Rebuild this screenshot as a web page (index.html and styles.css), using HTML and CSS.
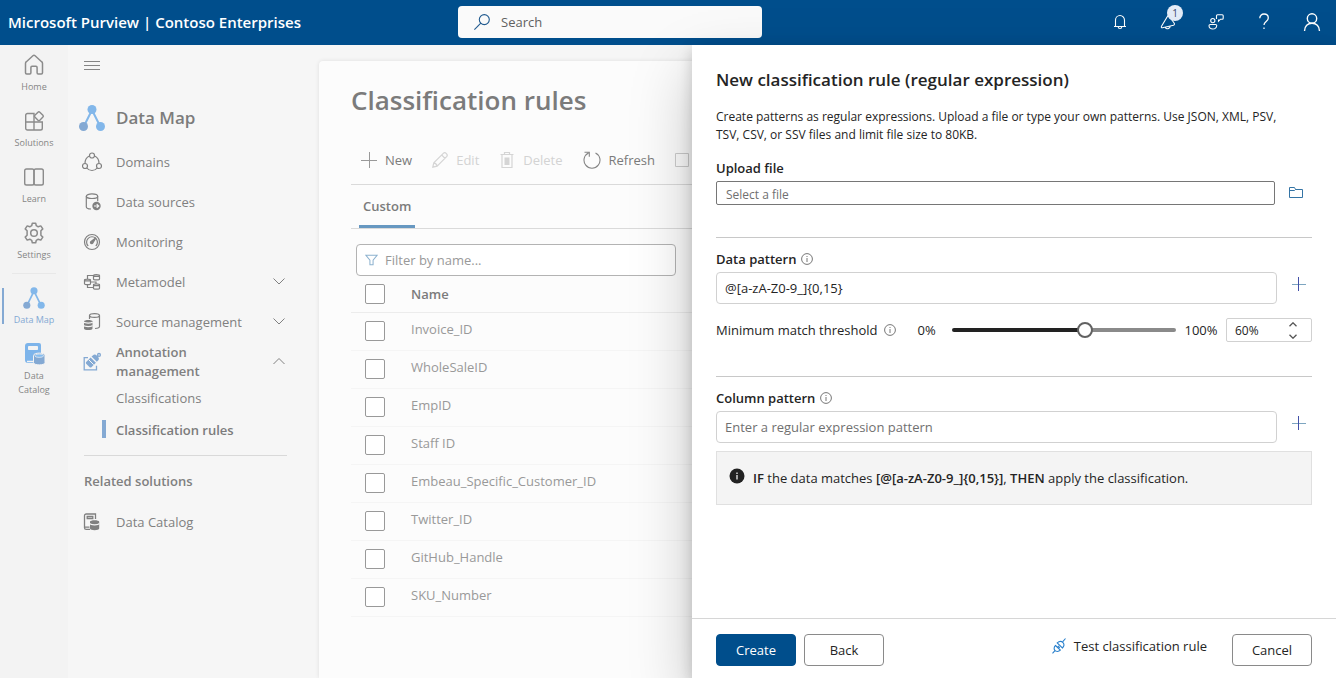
FILE: index.html
```html
<!DOCTYPE html>
<html lang="en">
<head>
<meta charset="utf-8">
<title>Microsoft Purview</title>
<link rel="stylesheet" href="styles.css">
</head>
<body>
<div class="app">
  <header class="topbar">
    <div class="brand">Microsoft Purview | Contoso Enterprises</div>
    <label class="search">
      <svg width="16" height="16" viewBox="0 0 16 16" fill="none" stroke="#205a8f" stroke-width="1.1"><circle cx="10.3" cy="5.6" r="5"/><path d="M6.8 9.2L.4 15.6"/></svg>
      <input type="search" placeholder="Search" aria-label="Search">
    </label>
    <div class="top-actions">
      <button aria-label="Notifications"><svg width="16" height="16" viewBox="0 0 16 16" fill="none" stroke="#fff" stroke-width="1.1"><path d="M2 12.5h12M3.5 12.5V6.200a4.500 4.700 0 0 1 9 0v6.300M6.200 12.700a1.800 1.800 0 0 0 3.600 0"/></svg></button>
      <button aria-label="Announcements"><svg width="16" height="16" viewBox="0 0 16 16" fill="none" stroke="#fff" stroke-width="1.1"><path d="M8 1.500L1.500 12.300c-.5.900 0 1.700 1 1.400l11-2.500c1-.3 1.200-1.400.6-2.200L9 2M5.300 13.200c1 2.500 5 1.700 4.900-1.200"/></svg><span class="badge">1</span></button>
      <button aria-label="Feedback"><svg width="16" height="16" viewBox="0 0 16 16" fill="none" stroke="#fff" stroke-width="1.100"><circle cx="4.800" cy="6.600" r="2.100"/><path d="M2.300 10.500h5.200c.8 0 1.300.4 1.200 1.200-.3 2.300-2 3.300-3.900 3.300S1.200 14 1 11.700c0-.8.5-1.200 1.300-1.200zM8.500 5V1.800c0-.6.4-1 1-1h4.700c.6 0 1 .4 1 1v2.400c0 .6-.4 1-1 1h-1.700l-2 2V5.600"/></svg></button>
      <button aria-label="Help"><svg width="16" height="18" viewBox="0 0 16 18" fill="none" stroke="#fff" stroke-width="1.300"><path d="M3.800 5.300C3.800 2.700 5.600 1 8 1s4.300 1.600 4.300 3.900c0 3.500-4.300 3.600-4.300 7.100M8 14.500v1.600"/></svg></button>
      <button aria-label="Account"><svg width="18" height="18" viewBox="0 0 18 18" fill="none" stroke="#fff" stroke-width="1.400"><circle cx="9" cy="5.500" r="4.700"/><path d="M1.500 18c0-4.700 3.300-7.800 7.500-7.800s7.500 3.100 7.500 7.800"/></svg></button>
    </div>
  </header>

  <div class="workspace">
    <nav class="rail" aria-label="Solutions">
      <a class="rail-item" href="#"><svg width="22" height="22" viewBox="0 0 22 22" fill="none" stroke="#8b8b8b" stroke-width="1.500"><path d="M2.500 9.500c0-.8.3-1.300.9-1.800l6.500-5.900c.7-.6 1.500-.6 2.200 0l6.500 5.900c.6.500.9 1 .9 1.800v9.300c0 .7-.4 1.200-1.200 1.200h-3.100c-.7 0-1.100-.5-1.100-1.200V13.500c0-.7-.4-1.200-1.100-1.200H9c-.7 0-1.100.5-1.100 1.200v5.300c0 .7-.4 1.200-1.100 1.200H3.700c-.8 0-1.200-.5-1.200-1.200z"/></svg>Home</a>
      <a class="rail-item" href="#"><svg width="22" height="22" viewBox="0 0 22 22" fill="none" stroke="#8b8b8b" stroke-width="1.400"><path d="M11 12V3.500H4.500A1.800 1.800 0 0 0 2.700 5.300v12.900A1.800 1.800 0 0 0 4.500 20h13a1.800 1.800 0 0 0 1.800-1.800V12H2.700M11 12v8"/><rect x="12.400" y="2.700" width="7" height="7" rx="1.300" transform="rotate(45 15.900 6.200)"/></svg>Solutions</a>
      <a class="rail-item" href="#"><svg width="22" height="22" viewBox="0 0 22 22" fill="none" stroke="#8b8b8b" stroke-width="1.400"><rect x="1.700" y="3" width="9.300" height="16" rx="1.800"/><rect x="11" y="3" width="9.300" height="16" rx="1.800"/></svg>Learn</a>
      <a class="rail-item" href="#"><svg width="22" height="22" viewBox="0 0 22 22" fill="none" stroke="#8b8b8b" stroke-width="1.500" stroke-linejoin="round"><circle cx="11" cy="11" r="3.300"/><path d="M9.300 1.200h3.400l.6 2.500 1.900 1.100 2.600-.9 2 3-1.900 1.900v4.400l1.900 1.900-2 3-2.600-.9-1.900 1.100-.6 2.500H9.300l-.6-2.500-1.900-1.100-2.600.9-2-3 1.900-1.900V8.800L2.200 6.900l2-3 2.600.9 1.900-1.100z"/></svg>Settings</a>
      <hr class="rail-rule">
      <a class="rail-item active" href="#"><svg width="22" height="22" viewBox="0 0 26 26"><path d="M13 5L5 21M13 5l8 16" stroke="#82b7ea" stroke-width="2"/><circle cx="13" cy="4.500" r="4.200" fill="#82b7ea"/><circle cx="4.500" cy="21.500" r="4.200" fill="#84a9d3"/><circle cx="21.500" cy="21.500" r="4.200" fill="#82b7ea"/></svg>Data Map</a>
      <a class="rail-item" href="#"><svg width="22" height="22" viewBox="0 0 22 22"><path d="M5 0h11a2 2 0 0 1 2 2v18H5a3 3 0 0 1-3-3V3a3 3 0 0 1 3-3z" fill="#7db4ea"/><rect x="5" y="3" width="10" height="4" rx=".8" fill="#f3f3f3"/><path d="M4 18.500h7" stroke="#f3f3f3" stroke-width="1.500"/><path d="M10.500 12.500c0-3.200 11.500-3.200 11.500 0v7c0 3.200-11.500 3.200-11.500 0z" fill="#84a9d3" stroke="#f3f3f3"/><ellipse cx="16.200" cy="12.700" rx="4.400" ry="1.700" fill="#86bdf0" stroke="#f3f3f3" stroke-width=".7"/></svg>Data<br>Catalog</a>
    </nav>

    <nav class="side" aria-label="Data Map">
      <button class="menu-toggle" aria-label="Collapse menu"><svg width="16" height="10" viewBox="0 0 16 10" stroke="#858585"><path d="M0 .5h16M0 4.500h16M0 8.500h16"/></svg></button>
      <div class="side-title"><svg width="26" height="26" viewBox="0 0 26 26"><path d="M13 5L5 21M13 5l8 16" stroke="#82b7ea" stroke-width="2"/><circle cx="13" cy="4.500" r="4.500" fill="#82b7ea"/><circle cx="4.500" cy="21.500" r="4.500" fill="#84a9d3"/><circle cx="21.500" cy="21.500" r="4.500" fill="#82b7ea"/></svg>Data Map</div>
      <a class="side-item" href="#"><svg width="20" height="20" viewBox="0 0 20 20" fill="none" stroke="#808080" stroke-width="1.200"><circle cx="10" cy="3.500" r="2.500"/><circle cx="3" cy="14" r="2.500"/><circle cx="17" cy="14" r="2.500"/><path d="M7.500 4C4.500 5.200 3 8 3 11.500M12.500 4c3 1.200 4.500 4 4.500 7.500M4.800 16c2.500 3.300 7.900 3.300 10.400 0"/></svg><span>Domains</span></a>
      <a class="side-item" href="#"><svg width="20" height="20" viewBox="0 0 20 20" fill="none" stroke="#808080" stroke-width="1.200"><ellipse cx="10" cy="4.200" rx="5.700" ry="2.300"/><path d="M4.300 4.200v10.500c0 1.300 2 2.200 4.700 2.300M15.700 4.200v5"/><circle cx="14.500" cy="14" r="4.200" fill="#808080" stroke="none"/><path d="M12 14h4.500M14.700 12.100l2 1.900-2 1.900" stroke="#f6f6f6"/></svg><span>Data sources</span></a>
      <a class="side-item" href="#"><svg width="20" height="20" viewBox="0 0 20 20" fill="none" stroke="#808080" stroke-width="1.200"><circle cx="10" cy="10" r="7.500"/><path d="M6.200 14a5.400 5.400 0 1 1 7.600 0"/><path d="M14 5.800l-5 3.700a1.200 1.200 0 1 0 1.700 1.600z" fill="#808080"/></svg><span>Monitoring</span></a>
      <a class="side-item" href="#"><svg width="20" height="20" viewBox="0 0 20 20" fill="none" stroke="#808080" stroke-width="1.200"><path d="M11.500 3.500c0-1.200 6-1.200 6 0V7c0 1.200-6 1.200-6 0zM11.500 3.500c0 1.200 6 1.200 6 0M11.500 12.800c0-1.200 6-1.200 6 0v3.500c0 1.200-6 1.200-6 0zM11.500 12.800c0 1.200 6 1.200 6 0M2.500 8c0-1.200 6-1.200 6 0v3.800c0 1.200-6 1.200-6 0zM2.500 8c0 1.200 6 1.200 6 0M5.500 7V3.500h6M5.500 12.800v2.700h6M8.500 10H14v1.800"/></svg><span>Metamodel</span><svg class="chev" width="12" height="8" viewBox="0 0 12 8" fill="none" stroke="#808080"><path d="M.5.5L6 6 11.500.5"/></svg></a>
      <a class="side-item" href="#"><svg width="20" height="20" viewBox="0 0 20 20" fill="none" stroke="#808080" stroke-width="1.200"><ellipse cx="12.500" cy="3.500" rx="5" ry="1.900"/><path d="M7.500 3.500V7M17.500 3.500v11c0 1-1.500 1.800-4.500 2"/><path d="M2 9.500c0-2 8.500-2 8.500 0v7c0 2-8.500 2-8.500 0z" fill="#808080" stroke="none"/><path d="M2 10c.8 1.500 7.700 1.500 8.500 0M2 13.500c.8 1.500 7.700 1.500 8.500 0" stroke="#f6f6f6"/></svg><span>Source management</span><svg class="chev" width="12" height="8" viewBox="0 0 12 8" fill="none" stroke="#808080"><path d="M.5.5L6 6 11.500.5"/></svg></a>
      <a class="side-item open" href="#"><svg width="20" height="20" viewBox="0 0 20 20" fill="none" stroke="#84a9d3" stroke-width="1.300"><path d="M6 5.600H2.200v12.200h12.300v-4"/><path d="M10.800 3.400c1.300-1.200 2.800-1 3.900.1l1.400 1.400c1 1 1.200 2.500 0 3.700l-1.300 1.200-5.300-5.200z" fill="#84a9d3" stroke="none"/><path d="M8.600 5.500l5.300 5.300-4.200 4.100c-.8.8-1.600.8-2.300 0l-3-3c-.7-.7-.7-1.500 0-2.200z" fill="#84a9d3" stroke="none"/><path d="M6.700 7.700l5 5" stroke="#f6f6f6" stroke-width="1"/><path d="M14.800 4.900l1.400-1.300"/><circle cx="17" cy="2.900" r="1.400"/></svg><span>Annotation<br>management</span><svg class="chev" width="12" height="8" viewBox="0 0 12 8" fill="none" stroke="#808080"><path d="M.5 6L6 .5 11.500 6"/></svg></a>
      <a class="sub-item" href="#">Classifications</a>
      <a class="sub-item selected" href="#">Classification rules</a>
      <hr class="side-rule">
      <div class="side-heading">Related solutions</div>
      <a class="side-item" href="#"><svg width="20" height="20" viewBox="0 0 20 20" fill="none" stroke="#808080" stroke-width="1.300"><path d="M13.500 7V2H4.200A1.700 1.700 0 0 0 2.500 3.700v12a1.700 1.700 0 0 0 1.700 1.700H8M2.700 15.200H7.500"/><path d="M5.200 4.500h5.600v2H5.200z"/><path d="M8 9.800c0-2 9.200-2 9.200 0v6.700c0 2.200-9.200 2.200-9.200 0z" fill="#808080" stroke="none"/><path d="M8 11.500c1 1.700 8.200 1.700 9.200 0" stroke="#f6f6f6"/></svg><span>Data Catalog</span></a>
    </nav>

    <main class="card">
      <h1>Classification rules</h1>
      <div class="toolbar">
        <button><svg width="16" height="16" viewBox="0 0 16 16" stroke="#999"><path d="M0 8.500h16M8.500 0v16"/></svg>New</button>
        <button disabled><svg width="16" height="16" viewBox="0 0 16 16" fill="none" stroke="#d5d5d5" stroke-width="1.200"><path d="M.8 15.200l1-4.300 9.500-9.500c1.900-1.900 5.200 1.300 3.300 3.300l-9.500 9.500zM9.700 3l3.300 3.300M1.800 10.900c1.700.3 3 1.600 3.300 3.300"/></svg>Edit</button>
        <button disabled><svg width="16" height="16" viewBox="0 0 16 16" fill="none" stroke="#d5d5d5" stroke-width="1.200"><path d="M1.500 2.500h13M5.500 2.500v-2h5v2M3 2.500v13h10v-13"/><path d="M5.500 5.500h5v7.500h-5z" fill="#d5d5d5" stroke="none"/></svg>Delete</button>
        <button><svg width="18" height="18" viewBox="0 0 18 18" fill="none" stroke="#858585" stroke-width="1.100"><path d="M5.500 2A8 8 0 1 0 12.500 2M1.500 1.200h4.800v4.600"/></svg>Refresh</button>
        <button disabled aria-label="Select all"><svg width="14" height="14" viewBox="0 0 14 14" fill="none" stroke="#ccc"><path d="M.5.5h13v13H.5z"/></svg></button>
      </div>
      <div class="tabs" role="tablist"><button class="tab" role="tab" aria-selected="true">Custom</button></div>
      <label class="filter"><svg width="13" height="12" viewBox="0 0 14 12" fill="none" stroke="#8db2cf" stroke-width="1.100"><path d="M.8.8h12.400L8.700 6.200v5H5.300v-5z"/></svg><input type="text" placeholder="Filter by name..." aria-label="Filter by name"></label>
      <table class="rules">
        <thead><tr><th class="pick"><input type="checkbox" aria-label="Select all rules"></th><th>Name</th></tr></thead>
        <tbody>
          <tr><td class="pick"><input type="checkbox" id="r1"></td><td><label for="r1">Invoice_ID</label></td></tr>
          <tr><td class="pick"><input type="checkbox" id="r2"></td><td><label for="r2">WholeSaleID</label></td></tr>
          <tr><td class="pick"><input type="checkbox" id="r3"></td><td><label for="r3">EmpID</label></td></tr>
          <tr><td class="pick"><input type="checkbox" id="r4"></td><td><label for="r4">Staff ID</label></td></tr>
          <tr><td class="pick"><input type="checkbox" id="r5"></td><td><label for="r5">Embeau_Specific_Customer_ID</label></td></tr>
          <tr><td class="pick"><input type="checkbox" id="r6"></td><td><label for="r6">Twitter_ID</label></td></tr>
          <tr><td class="pick"><input type="checkbox" id="r7"></td><td><label for="r7">GitHub_Handle</label></td></tr>
          <tr><td class="pick"><input type="checkbox" id="r8"></td><td><label for="r8">SKU_Number</label></td></tr>
        </tbody>
      </table>
    </main>
  </div>

  <aside class="drawer" aria-labelledby="drawer-title">
    <form class="drawer-form">
      <div class="drawer-body">
        <h2 id="drawer-title">New classification rule (regular expression)</h2>
        <p class="intro">Create patterns as regular expressions. Upload a file or type your own patterns. Use JSON, XML, PSV, TSV, CSV, or SSV files and limit file size to 80KB.</p>
        <section class="upload">
          <label class="field-label" for="file">Upload file</label>
          <div class="field-row">
            <input class="file-box" id="file" type="text" placeholder="Select a file">
            <button class="icon-btn" type="button" aria-label="Browse"><svg width="14" height="11" viewBox="0 0 14 11" fill="none" stroke="#3474a5"><path d="M.5 10.500V.5h5l1 2h7v8zM.5 3.500h5l1-1"/></svg></button>
          </div>
        </section>
        <section class="group data-group">
          <div class="label-line"><label class="field-label" for="data">Data pattern</label><svg class="info" width="12" height="12" viewBox="0 0 12 12" fill="none" stroke="#777"><circle cx="6" cy="6" r="5.400"/><path d="M6 5v4M6 3v1"/></svg></div>
          <div class="field-row">
            <input class="text-box" id="data" type="text" value="@[a-zA-Z0-9_]{0,15}">
            <button class="icon-btn add" type="button" aria-label="Add data pattern"><svg width="14" height="14" viewBox="0 0 14 14"><path d="M0 7.500h14" stroke="#7da5c0"/><path d="M6.500 0v14" stroke="#4250a8"/></svg></button>
          </div>
          <div class="threshold">
            <label class="threshold-label" for="range">Minimum match threshold</label><svg class="info" width="12" height="12" viewBox="0 0 12 12" fill="none" stroke="#777"><circle cx="6" cy="6" r="5.400"/><path d="M6 5v4M6 3v1"/></svg>
            <span class="low">0%</span>
            <input class="slider" id="range" type="range" min="0" max="100" value="60">
            <span class="high">100%</span>
            <div class="spinner"><input type="text" value="60%" aria-label="Threshold"><div class="steps"><button type="button" aria-label="Increase"><svg width="8" height="5" viewBox="0 0 8 5" fill="none" stroke="#555" stroke-width="1.300"><path d="M.5 4.300L4 .8l3.500 3.500"/></svg></button><button type="button" aria-label="Decrease"><svg width="8" height="5" viewBox="0 0 8 5" fill="none" stroke="#555" stroke-width="1.300"><path d="M.5.700L4 4.200 7.500.7"/></svg></button></div></div>
          </div>
        </section>
        <section class="group">
          <div class="label-line"><label class="field-label" for="col">Column pattern</label><svg class="info" width="12" height="12" viewBox="0 0 12 12" fill="none" stroke="#777"><circle cx="6" cy="6" r="5.400"/><path d="M6 5v4M6 3v1"/></svg></div>
          <div class="field-row">
            <input class="text-box" id="col" type="text" placeholder="Enter a regular expression pattern">
            <button class="icon-btn add" type="button" aria-label="Add column pattern"><svg width="14" height="14" viewBox="0 0 14 14"><path d="M0 7.500h14" stroke="#7da5c0"/><path d="M6.500 0v14" stroke="#4250a8"/></svg></button>
          </div>
          <div class="notice"><svg width="16" height="16" viewBox="0 0 16 16"><circle cx="8" cy="8" r="7.500" fill="#222"/><path d="M8 7v4.500M8 4.500V6" stroke="#fff" stroke-width="1.200"/></svg><span><b>IF</b> the data matches <b>[@[a-zA-Z0-9_]{0,15}]</b>, <b>THEN</b> apply the classification.</span></div>
        </section>
      </div>
      <footer class="drawer-foot">
        <button class="btn primary" type="button">Create</button>
        <button class="btn" type="button">Back</button>
        <button class="test" type="button"><svg width="14" height="16" viewBox="0 0 14 16" fill="none" stroke="#2a80cc" stroke-width="1.100"><path d="M.5 15.300l2.700-3M10.800 3.600L13.500.5M3.500 7.500l4.800 4.600c-1.700 1.800-4.200 1.600-5.300.4-1.200-1.200-1.300-3.300.5-5zM5.200 4.900L10.400 10c1.600-1.700 1.900-4 .6-5.400-1.500-1.500-4-1.300-5.800.3zM5.500 9.400l1.400-1.500M6.400 10.300l1.400-1.500"/></svg>Test classification rule</button>
        <button class="btn" type="button">Cancel</button>
      </footer>
    </form>
  </aside>
</div>
</body>
</html>
```
FILE: styles.css
```css
* { box-sizing: border-box; }
body { margin: 0; font: 13px/20px "Open Sans", "Noto Sans", sans-serif; color: #242424; }
button, input { font: inherit; color: inherit; margin: 0; padding: 0; border: 0; background: none; }
input { outline: 0; min-width: 0; }
a { color: inherit; text-decoration: none; }
svg { display: block; flex: none; }
b { font-weight: 600; }

.app { position: relative; display: flex; flex-direction: column; height: 100vh; overflow: hidden; background: #f6f6f6; }

.topbar { display: flex; align-items: center; flex: none; height: 45px; padding: 0 15px 2px 8px; background: #004e8c; color: #fff; }
.brand { flex: none; width: 450px; font-size: 15px; font-weight: 600; white-space: nowrap; }
.search { display: flex; align-items: center; gap: 11px; width: 304px; height: 32px; padding: 0 16px; border-radius: 4px; background: #fafafa; color: #616161; }
.search input { flex: 1; }
.search input::placeholder { color: #616161; }
.top-actions { display: flex; flex: 1; justify-content: flex-end; gap: 30px; }
.top-actions button { position: relative; display: grid; place-items: center; width: 18px; height: 20px; }
.badge { position: absolute; top: -7px; left: 8px; width: 16px; height: 16px; border-radius: 50%; background: #e3ecf8; color: #3a4a6a; font-size: 10px; line-height: 16px; text-align: center; }

.workspace { display: flex; flex: 1; min-height: 0; }
.rail { flex: none; width: 68px; background: #f3f3f3; color: #858585; font-size: 9px; line-height: 14px; text-align: center; }
.rail-item { display: flex; flex-direction: column; align-items: center; gap: 4px; min-height: 56px; padding-top: 9px; }
.rail-item.active { color: #84a9d3; background: linear-gradient(#84a9d3, #84a9d3) 2px 10px / 2px 36px no-repeat; }
.rail-rule { margin: 4px 12px 4px; border: 0; border-top: 1px solid #e8e8e8; }

.side { flex: none; width: 250px; color: #808080; }
.menu-toggle { display: block; margin: 16px 0 0 16px; padding-bottom: 23px; }
.side-title { display: flex; align-items: center; gap: 11px; height: 48px; padding-left: 11px; color: #7c7c7c; font-size: 17px; font-weight: 600; }
.side-item { display: flex; align-items: center; gap: 14px; height: 40px; padding: 0 33px 0 14px; }
.side-item.open { line-height: 19px; font-weight: 600; }
.chev { margin-left: auto; }
.sub-item { display: flex; align-items: center; height: 32px; padding-left: 48px; }
.sub-item.selected { font-weight: 600; color: #7c7c7c; background: linear-gradient(#84a9d3, #84a9d3) 34px 6px / 4px 18px no-repeat; }
.side-rule { margin: 9px 31px 15px 16px; border: 0; border-top: 1px solid #d9d9d9; }
.side-heading { margin-bottom: 11px; padding-left: 16px; font-weight: 600; }

.card { flex: 1; min-width: 0; margin: 16px 0 0 1px; padding: 20px 24px 0 32px; border-radius: 4px 0 0 0; background: #fcfcfc; box-shadow: 0 0 4px rgba(0, 0, 0, .1); color: #7b7b7b; }
h1 { margin: 0; font-size: 26px; line-height: 38px; font-weight: 600; }
.toolbar { display: flex; gap: 20px; height: 66px; padding: 22px 10px 6px; border-bottom: 1px solid #dadada; white-space: nowrap; }
.toolbar button { display: flex; align-items: center; gap: 8px; }
.toolbar button:disabled { color: #d3d3d3; }
.tabs { display: flex; height: 44px; padding-left: 8px; border-bottom: 1px solid #dadada; }
.tab { padding: 2px 4px 0; border-bottom: 3px solid #6798c1; font-weight: 600; }
.filter { display: flex; align-items: center; gap: 7px; width: 320px; height: 32px; margin: 15px 0 0 5px; padding: 0 8px; border: 1px solid #b3b3b3; border-radius: 4px; background: #fff; color: #999; }
.filter input { flex: 1; }
.filter input::placeholder { color: #999; }
.rules { width: 100%; border-collapse: collapse; color: #999; text-align: left; }
.rules th { height: 36px; padding: 0; border-bottom: 1px solid #ececec; color: #7b7b7b; font-weight: 600; }
.rules td { height: 38px; padding: 0 0 4px; border-bottom: 1px solid #f5f5f5; }
.rules .pick { width: 60px; padding: 0 0 0 14px; }
.rules input { display: block; appearance: none; width: 20px; height: 20px; border: 1px solid #999; border-radius: 2px; background: #fff; }

.drawer { position: absolute; top: 45px; right: 0; bottom: 0; width: 644px; background: #fff; box-shadow: 0 26px 58px rgba(0, 0, 0, .22), 0 5px 14px rgba(0, 0, 0, .18); }
.drawer-form { display: flex; flex-direction: column; height: 100%; }
.drawer-body { flex: 1; padding: 23px 24px 0; }
h2 { margin: 0 0 16px; font-size: 17px; line-height: 24px; font-weight: 600; }
.intro { margin: 0 0 14px; padding-right: 16px; font-size: 12px; line-height: 18px; }
.field-label { display: block; font-weight: 600; }
.label-line { display: flex; align-items: center; gap: 5px; }
.field-row { display: flex; align-items: center; margin-top: 3px; }
.file-box { flex: 1; height: 24px; padding: 2px 9px 0; border: 1px solid #767676; border-radius: 2px; font-size: 12px; }
.text-box { flex: 1; height: 32px; padding: 0 8px; border: 1px solid #d1d1d1; border-radius: 4px; }
.file-box::placeholder, .text-box::placeholder { color: #707070; }
.icon-btn { display: flex; justify-content: center; width: 37px; padding: 0 0 2px 5px; }
.icon-btn.add { width: 35px; padding: 0 0 8px 8px; }
.upload { padding-bottom: 32px; }
.group { border-top: 1px solid #c8c8c8; padding-top: 11px; }
.data-group { padding-bottom: 34px; }
.threshold { display: flex; align-items: center; margin-top: 14px; }
.threshold-label { margin-right: 6px; }
.low { width: 56px; padding-left: 22px; }
.slider { flex: 1; height: 16px; appearance: none; }
.slider::-webkit-slider-runnable-track { height: 4px; border-radius: 2px; background: linear-gradient(90deg, #222 60%, #8a8a8a 60%); }
.slider::-webkit-slider-thumb { appearance: none; width: 16px; height: 16px; margin-top: -6px; border: 2px solid #616161; border-radius: 50%; background: #fff; }
.high { width: 50px; text-align: center; }
.spinner { display: flex; align-items: center; width: 86px; height: 24px; padding: 0 14px 0 8px; border: 1px solid #d1d1d1; border-radius: 2px; font-size: 12px; }
.spinner input { flex: 1; padding-top: 2px; }
.steps { display: flex; flex-direction: column; gap: 7px; }
.steps button { display: block; line-height: 0; }
.notice { display: flex; gap: 8px; margin-top: 8px; padding: 16px 12px; border: 1px solid #e0e0e0; background: #f4f4f4; }
.drawer-foot { display: flex; gap: 8px; padding: 15px 24px 12px; border-top: 1px solid #d6d6d6; }
.btn { width: 80px; height: 32px; border: 1px solid #8a8a8a; border-radius: 4px; }
.btn.primary { border-color: #004e8c; background: #004e8c; color: #fff; }
.test { display: flex; align-items: center; gap: 8px; height: 24px; margin: 0 17px 0 auto; }
```
